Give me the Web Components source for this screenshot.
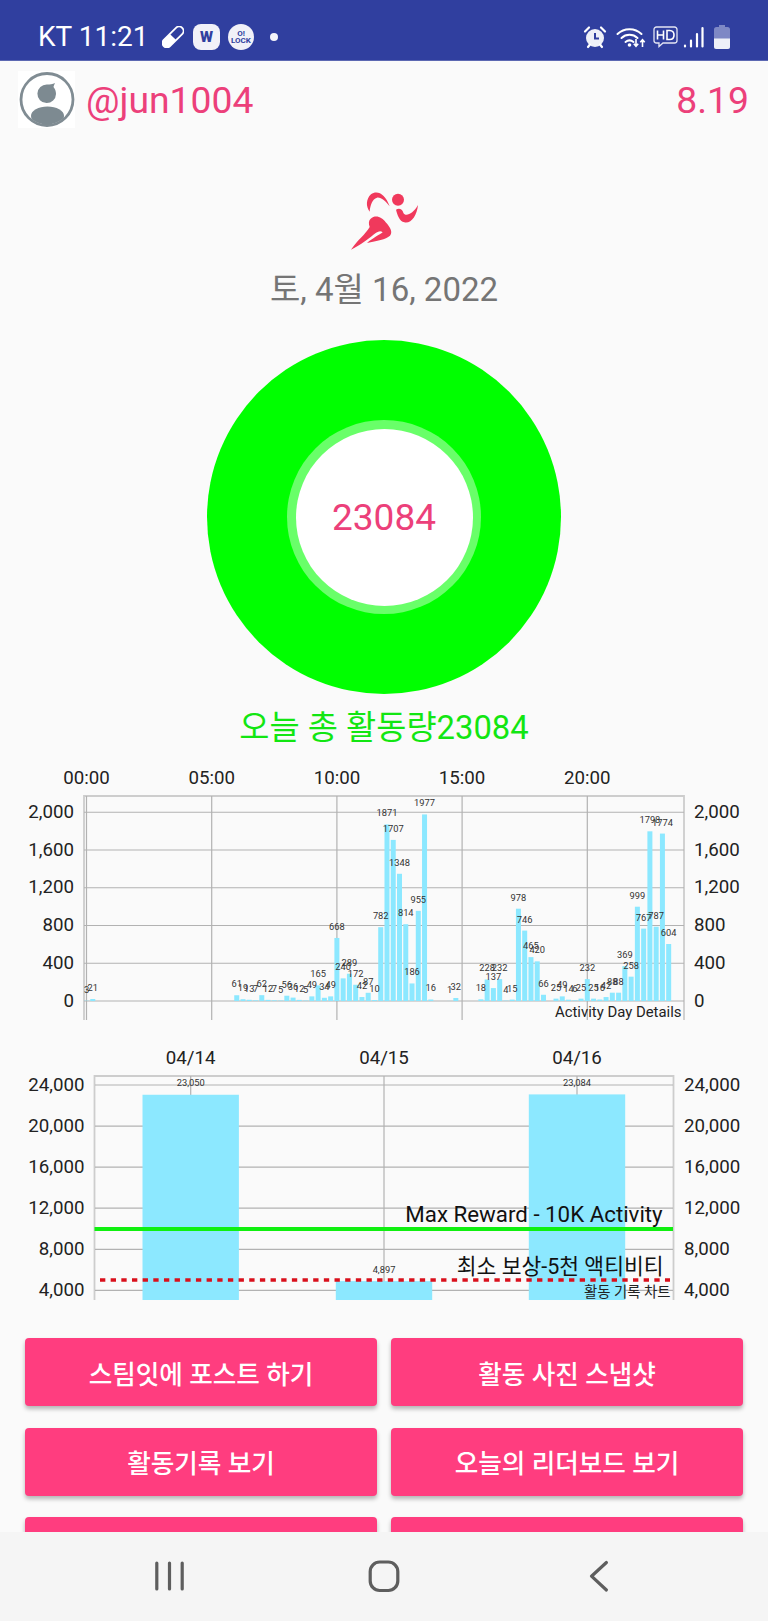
<!DOCTYPE html>
<html lang="ko">
<head>
<meta charset="utf-8">
<title>Activity</title>
<style>
  html, body { margin: 0; padding: 0; background: #fafafa; }
  body { font-family: Roboto, "Noto Sans CJK KR", sans-serif; width: 768px; height: 1621px; overflow: hidden; }
  .app { display: flex; flex-direction: column; height: 1621px; }
  .content { flex: 1; overflow: hidden; min-height: 0; }
</style>
</head>
<body>
<div class="app">
  <status-bar></status-bar>
  <div class="content">
    <user-header name="@jun1004" value="8.19"></user-header>
    <run-hero date="토, 4월 16, 2022"></run-hero>
    <activity-ring total="23084" caption="오늘 총 활동량23084"></activity-ring>
    <day-chart></day-chart>
    <history-chart></history-chart>
    <button-grid>
      <action-button>스팀잇에 포스트 하기</action-button>
      <action-button>활동 사진 스냅샷</action-button>
      <action-button>활동기록 보기</action-button>
      <action-button>오늘의 리더보드 보기</action-button>
      <action-button></action-button>
      <action-button></action-button>
    </button-grid>
  </div>
  <nav-bar></nav-bar>
</div>

<script>
const FONT = 'Roboto, "Noto Sans CJK KR", sans-serif';

class StatusBar extends HTMLElement {
  constructor() {
    super();
    this.attachShadow({ mode: 'open' });
    this.shadowRoot.innerHTML = `<style>
      :host { display: flex; align-items: center; height: 60px; background: #303f9f; color: #fff; font-family: ${FONT}; padding: 14px 0 0 38px; box-sizing: border-box; box-shadow: 0 1px 0 #5c68b2; position: relative; }
      .time { font-size: 28px; line-height: 30px; width: 124px; white-space: nowrap; }
      svg { display: block; flex: none; }
      .w { width: 27px; height: 26px; border-radius: 8px; background: #f1f1f8; color: #303f9f; font-weight: 900; font-size: 15px; display: flex; align-items: center; justify-content: center; margin-left: 9px; }
      .lock { width: 26px; height: 26px; border-radius: 50%; background: #f1f1f8; color: #303f9f; font-weight: 700; font-size: 8px; line-height: 7.5px; text-align: center; display: flex; align-items: center; justify-content: center; margin-left: 8px; }
      .dot { width: 8px; height: 8px; border-radius: 50%; background: #f4f4fa; margin-left: 16px; }
      .right { margin-left: auto; display: flex; align-items: center; margin-right: 38px; }
    </style>
    <span class="time">KT 11:21</span>
    <svg width="22" height="22" viewBox="0 0 22 22"><g transform="rotate(-45 11 11)"><rect x="-2" y="6.6" width="26" height="8.8" rx="4.4" fill="none" stroke="#fff" stroke-width="1.8"/><path d="M-2 11a4.4 4.4 0 0 1 4.4-4.4H11v8.8H2.400A4.400 4.400 0 0 1-2 11z" fill="#fff"/></g></svg>
    <span class="w">W</span>
    <span class="lock"><span>O!<br>LOCK</span></span>
    <span class="dot"></span>
    <span class="right">
      <svg width="24" height="24" viewBox="0 0 24 24"><circle cx="12" cy="13" r="9" fill="#eef0f8"/><path d="M12 8v5.500h4" fill="none" stroke="#303f9f" stroke-width="2"/><path d="M2 6.500 6 2.500M22 6.500 18 2.500M5 22l2-2.500M19 22l-2-2.500" stroke="#fff" stroke-width="2.200" stroke-linecap="round"/></svg>
      <svg width="31" height="24" viewBox="0 0 31 24" style="margin-left:9px"><g fill="none" stroke="#fff" stroke-width="2" stroke-linecap="round"><path d="M1.500 9C8 2.500 19 2.500 25.500 9"/><path d="M5.500 13c4.500-4.200 11.500-4.200 16 0"/><path d="M9.500 17c2.500-2 5.500-2 8 0"/></g><circle cx="13.500" cy="20" r="1.800" fill="#fff"/><path d="M20 14v7m-2.200-2.300 2.200 2.500 2.200-2.500M26.500 22v-7m-2.200 2.300 2.200-2.500 2.200 2.500" fill="none" stroke="#fff" stroke-width="1.600"/></svg>
      <svg width="25" height="22" viewBox="0 0 25 22" style="margin-left:6px"><path d="M3.500 1h18a2.500 2.500 0 0 1 2.500 2.500v11a2.500 2.500 0 0 1-2.500 2.500H10l-4 3.500V17H3.500A2.500 2.500 0 0 1 1 14.500v-11A2.500 2.500 0 0 1 3.500 1z" fill="none" stroke="#e3e5f3" stroke-width="1.300"/><path d="M4.500 4.500v9M4.500 9h6M10.500 4.500v9M14 4.500v9h2.800c2.800 0 4.200-1.800 4.200-4.500s-1.400-4.500-4.200-4.500z" fill="none" stroke="#fff" stroke-width="1.600"/></svg>
      <svg width="21" height="22" viewBox="0 0 21 22" style="margin-left:5px"><g stroke="#fff" stroke-width="2.200" stroke-linecap="round"><path d="M2 20.500v-1M8 20.500v-6M14 20.500V8M19.500 20.500V2"/></g></svg>
      <svg width="16" height="24" viewBox="0 0 16 24" style="margin-left:10px"><path d="M5 0h6v2h2.500A2.500 2.500 0 0 1 16 4.500v17a2.500 2.500 0 0 1-2.500 2.500h-11A2.500 2.500 0 0 1 0 21.500v-17A2.500 2.500 0 0 1 2.500 2H5z" fill="#7e88c5"/><path d="M0 13.500h16v8a2.500 2.500 0 0 1-2.500 2.500h-11A2.500 2.500 0 0 1 0 21.500z" fill="#eef0f8"/></svg>
    </span>`;
  }
}
customElements.define('status-bar', StatusBar);

class UserHeader extends HTMLElement {
  constructor() {
    super();
    this.attachShadow({ mode: 'open' });
    this.shadowRoot.innerHTML = `<style>
      :host { display: flex; align-items: center; height: 72px; padding: 7px 19px 0 18px; box-sizing: border-box; color: #ec407a; font-family: ${FONT}; font-size: 37.300px; }
      .avatar { width: 57px; height: 57px; background: #fff; flex: none; display: block; }
      .name { margin-left: 11px; }
      .value { margin-left: auto; }
    </style>
    <svg class="avatar" viewBox="0 0 57 57">
      <defs><clipPath id="c"><circle cx="29" cy="28.500" r="25"/></clipPath></defs>
      <circle cx="29" cy="28.500" r="26" fill="none" stroke="#808c93" stroke-width="2.800"/>
      <path d="M29 13.500c3 0 5.500-.5 8-1.500-.8 1.800-1.300 3-1.500 4 1.500 1.700 2.500 4 2.500 7a9.300 9.300 0 1 1-9-9.500z" fill="#7d8a91"/>
      <ellipse cx="29.500" cy="45" rx="16.500" ry="9.500" fill="#7d8a91" clip-path="url(#c)"/>
    </svg>
    <span class="name"></span><span class="value"></span>`;
  }
  connectedCallback() {
    this.shadowRoot.querySelector('.name').textContent = this.getAttribute('name');
    this.shadowRoot.querySelector('.value').textContent = this.getAttribute('value');
  }
}
customElements.define('user-header', UserHeader);

class RunHero extends HTMLElement {
  constructor() {
    super();
    this.attachShadow({ mode: 'open' });
    this.shadowRoot.innerHTML = `<style>
      :host { display: flex; flex-direction: column; align-items: center; font-family: ${FONT}; padding-top: 57px; }
      svg { display: block; width: 76px; height: 63px; margin-left: 1px; }
      .date { color: #757575; font-size: 33px; line-height: 40px; margin-top: 18px; }
    </style>
    <svg viewBox="290 60 228 189">
      <g fill="#f0395c">
        <circle cx="443" cy="92" r="18"/>
        <path d="M358 128C346 112 347 90 362 76 380 62 405 74 418 112 405 96 392 84 380 86 366 90 360 108 358 128z"/>
        <path d="M437 122C446 116 456 120 459 131 465 145 488 135 503 108 500 140 482 165 462 160 447 156 441 138 437 122z"/>
        <path d="M302 242C322 212 345 197 358 174 354 163 355 154 361 149 376 136 396 145 406 160 420 175 428 190 419 200 406 212 380 215 350 222 368 207 388 197 397 190 388 182 378 190 362 203 342 219 322 232 302 242z"/>
      </g>
    </svg>
    <span class="date"></span>`;
  }
  connectedCallback() {
    this.shadowRoot.querySelector('.date').textContent = this.getAttribute('date');
  }
}
customElements.define('run-hero', RunHero);

class ActivityRing extends HTMLElement {
  constructor() {
    super();
    this.attachShadow({ mode: 'open' });
    this.shadowRoot.innerHTML = `<style>
      :host { display: flex; flex-direction: column; align-items: center; font-family: ${FONT}; padding-top: 30px; }
      .outer { width: 354px; height: 354px; border-radius: 50%; background: #00ff00; display: flex; align-items: center; justify-content: center; }
      .mid { width: 194px; height: 194px; border-radius: 50%; background: #69ff69; display: flex; align-items: center; justify-content: center; }
      .inner { width: 177px; height: 177px; border-radius: 50%; background: #fff; color: #ec407a; font-size: 37px; display: flex; align-items: center; justify-content: center; }
      .caption { color: #12e612; font-size: 32.800px; line-height: 40px; margin-top: 14px; }
    </style>
    <div class="outer"><div class="mid"><div class="inner"></div></div></div>
    <span class="caption"></span>`;
  }
  connectedCallback() {
    this.shadowRoot.querySelector('.inner').textContent = this.getAttribute('total');
    this.shadowRoot.querySelector('.caption').textContent = this.getAttribute('caption');
  }
}
customElements.define('activity-ring', ActivityRing);

// 15분 단위 활동량: [index, value]
const DAY_DATA = [[0,3],[1,21],[24,61],[25,19],[26,13],[27,7],[28,62],[29,12],[30,7],[31,5],[32,56],[33,36],[34,12],[35,5],[36,49],[37,165],[38,34],[39,49],[40,668],[41,240],[42,289],[43,172],[44,42],[45,87],[46,10],[47,782],[48,1871],[49,1707],[50,1348],[51,814],[52,186],[53,955],[54,1977],[55,16],[58,1],[59,32],[63,18],[64,228],[65,137],[66,232],[67,4],[68,15],[69,978],[70,746],[71,465],[72,420],[73,66],[75,25],[76,49],[77,14],[78,6],[79,25],[80,232],[81,25],[82,16],[83,42],[84,88],[85,88],[86,369],[87,258],[88,999],[89,767],[90,1798],[91,787],[92,1774],[93,604]];

class DayChart extends HTMLElement {
  constructor() {
    super();
    this.attachShadow({ mode: 'open' });
    const zero = 241, unit = 37.75 / 400, x0 = 86.5, step = 6.26;
    let grid = '', axis = '', bars = '', labels = '';
    [0, 400, 800, 1200, 1600, 2000].forEach(v => {
      const y = zero - v * unit;
      const t = v.toLocaleString('en-US');
      grid += `<line x1="84" x2="684" y1="${y}" y2="${y}"/>`;
      axis += `<text x="74" y="${y + 5.500}" text-anchor="end">${t}</text><text x="694" y="${y + 5.500}">${t}</text>`;
    });
    ['00:00', '05:00', '10:00', '15:00', '20:00'].forEach((t, i) => {
      const x = x0 + i * 125.2;
      grid += `<line x1="${x}" x2="${x}" y1="36" y2="260"/>`;
      axis += `<text x="${x}" y="24" text-anchor="middle">${t}</text>`;
    });
    DAY_DATA.forEach(([i, v]) => {
      const x = x0 + i * step, h = v * unit;
      bars += `<rect x="${x - 2.500}" y="${zero - h}" width="5" height="${h}"/>`;
      labels += `<text x="${x}" y="${zero - h - 8}" text-anchor="middle">${v}</text>`;
    });
    this.shadowRoot.innerHTML = `<style>
      :host { display: block; height: 270px; margin-top: 12px; font-family: ${FONT}; }
      svg { display: block; }
      .grid line { stroke: #b2b2b2; stroke-width: 1.200; }
      .frame { fill: none; stroke: #cdcdcd; stroke-width: 1.800; }
      .axis text { font-size: 18.700px; fill: #222; }
      .bars rect { fill: #8ce8ff; }
      .labels text { font-size: 9.300px; fill: #333; }
      .desc { font-size: 14.900px; fill: #222; }
    </style>
    <svg width="768" height="270" viewBox="0 0 768 270">
      <path class="frame" d="M84 260V36H684V260"/>
      <g class="grid">${grid}</g>
      <g class="bars">${bars}</g>
      <g class="labels">${labels}</g>
      <g class="axis">${axis}</g>
      <text class="desc" x="681.500" y="257" text-anchor="end">Activity Day Details</text>
    </svg>`;
  }
}
customElements.define('day-chart', DayChart);

class HistoryChart extends HTMLElement {
  constructor() {
    super();
    this.attachShadow({ mode: 'open' });
    // 값 4000 = 41.07px, 아래쪽은 잘려 있음
    const y24 = 45, unit = 41.07 / 4000;
    const yOf = v => y24 + (24000 - v) * unit;
    let grid = '', axis = '', bars = '', labels = '';
    [24000, 20000, 16000, 12000, 8000, 4000].forEach(v => {
      const y = yOf(v), t = v.toLocaleString('en-US');
      grid += `<line x1="95" x2="673" y1="${y}" y2="${y}"/>`;
      axis += `<text x="84.500" y="${y + 5.500}" text-anchor="end">${t}</text><text x="684" y="${y + 5.500}">${t}</text>`;
    });
    [['04/14', 190.7, 23050], ['04/15', 384, 4897], ['04/16', 577, 23084]].forEach(([d, x, v]) => {
      const y = yOf(v);
      grid += `<line x1="${x}" x2="${x}" y1="36" y2="260"/>`;
      axis += `<text x="${x}" y="24" text-anchor="middle">${d}</text>`;
      bars += `<rect x="${x - 48.200}" y="${y}" width="96.400" height="${260 - y}"/>`;
      labels += `<text x="${x}" y="${y - 8.500}" text-anchor="middle">${v.toLocaleString('en-US')}</text>`;
    });
    this.shadowRoot.innerHTML = `<style>
      :host { display: block; height: 270px; margin-top: 10px; font-family: ${FONT}; }
      svg { display: block; }
      .grid line { stroke: #b2b2b2; stroke-width: 1.200; }
      .frame { fill: none; stroke: #cdcdcd; stroke-width: 1.800; }
      .axis text { font-size: 18.700px; fill: #222; }
      .bars rect { fill: #8ce8ff; }
      .labels text { font-size: 9.300px; fill: #333; }
      .limit { font-size: 22.300px; fill: #111; }
      .limit-ko { font-size: 21.500px; fill: #111; }
      .desc { font-size: 14.400px; fill: #222; }
    </style>
    <svg width="768" height="270" viewBox="0 0 768 270">
      <path class="frame" d="M94.500 260V36H673.500V260"/>
      <g class="grid">${grid}</g>
      <g class="bars">${bars}</g>
      <g class="labels">${labels}</g>
      <line x1="94.500" x2="673" y1="189" y2="189" stroke="#10f010" stroke-width="4"/>
      <line x1="100" x2="670" y1="240" y2="240" stroke="#d9101c" stroke-width="3.500" stroke-dasharray="5.330 5.330"/>
      <text class="limit" x="662.700" y="182.300" text-anchor="end">Max Reward - 10K Activity</text>
      <text class="limit-ko" x="663.500" y="234" text-anchor="end">최소 보상-5천 액티비티</text>
      <g class="axis">${axis}</g>
      <text class="desc" x="670.500" y="256.700" text-anchor="end">활동 기록 차트</text>
    </svg>`;
  }
}
customElements.define('history-chart', HistoryChart);

class ButtonGrid extends HTMLElement {
  constructor() {
    super();
    this.attachShadow({ mode: 'open' });
    this.shadowRoot.innerHTML = `<style>
      :host { display: grid; grid-template-columns: 352px 352px; column-gap: 14px; row-gap: 21.700px; padding: 28px 0 0 25px; }
    </style><slot></slot>`;
  }
}
customElements.define('button-grid', ButtonGrid);

class ActionButton extends HTMLElement {
  constructor() {
    super();
    this.attachShadow({ mode: 'open' });
    this.shadowRoot.innerHTML = `<style>
      :host { display: flex; align-items: center; justify-content: center; height: 68px; background: #ff3d7f; border-radius: 4px; color: #fff; font-family: ${FONT}; font-size: 25.600px; font-weight: 500; box-shadow: 0 3px 4px rgba(0,0,0,.28); }
    </style><slot></slot>`;
  }
}
customElements.define('action-button', ActionButton);

class NavBar extends HTMLElement {
  constructor() {
    super();
    this.attachShadow({ mode: 'open' });
    this.shadowRoot.innerHTML = `<style>
      :host { display: block; height: 89.500px; flex: none; background: #f5f5f5; position: relative; }
      svg { display: block; }
    </style>
    <svg width="768" height="89.500" viewBox="0 0 768 89.500" fill="none" stroke="#5e5e5e" stroke-width="3.200" stroke-linecap="round" stroke-linejoin="round">
      <path d="M156.800 31v26M169.500 31v26M182.200 31v26"/>
      <rect x="370.200" y="30" width="27.600" height="28.500" rx="9.500"/>
      <path d="M606.400 30.500 591.500 44.200 606.400 58"/>
    </svg>`;
  }
}
customElements.define('nav-bar', NavBar);
</script>
</body>
</html>
